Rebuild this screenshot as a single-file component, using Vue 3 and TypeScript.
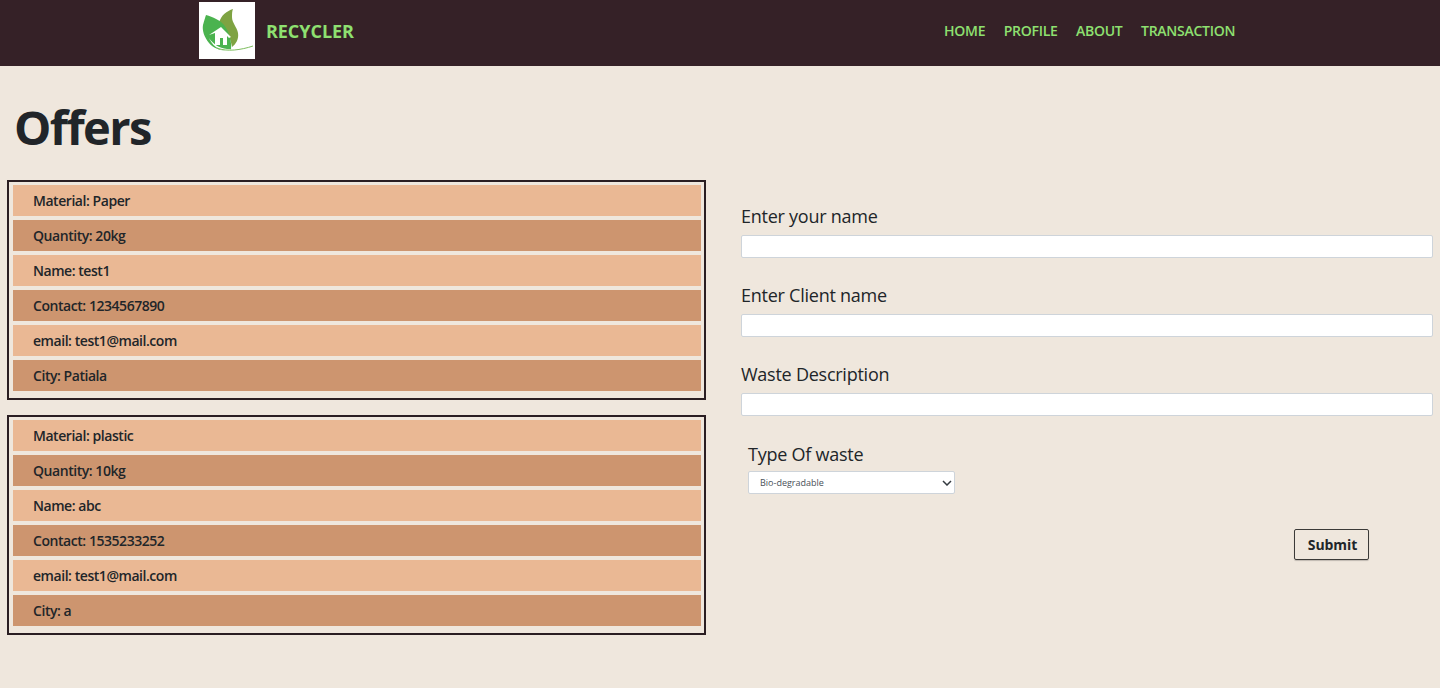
<template>
  <div class="page">
    <nav class="navbar">
      <div class="brand">
        <div class="logo">
          <svg width="56" height="57" viewBox="0 0 56 57">
            <path d="M34 7 C28 9 22 13 20 21 C26 26 31 33 33 45 C37 42 40 37 39 31 C38 25 33 21 33 15 C33 12 33 9 34 7Z" fill="#7ea342" />
            <path d="M7 13 C14 15 21 18 25 23 C30 29 33 39 32 48 C24 50 15 47 10 41 C5 35 3 28 4 23 C5 19 6 16 7 13Z" fill="#4bb34f" />
            <path d="M10 33 L22 25 L32 35 L30 36 L28 34 L28 43 L16 43 L16 31Z" fill="#fff" />
            <rect x="21" y="36" width="3" height="7" fill="#4bb34f" />
            <path d="M10 36 C14 42 20 46 28 47 C36 48 45 47 54 44 C45 49 35 50 27 49 C19 48 13 43 10 36Z" fill="#fff" />
            <path d="M18 46 C28 50 42 48 54 44" fill="none" stroke="#7dbd5e" stroke-width="1" />
          </svg>
        </div>
        <span class="brand-name">RECYCLER</span>
      </div>
      <ul class="nav-links">
        <li v-for="link in links" :key="link">{{ link }}</li>
      </ul>
    </nav>

    <h1 class="title">Offers</h1>

    <div class="content">
      <div class="offers">
        <div v-for="offer in offers" :key="offer.contact" class="offer">
          <div class="row">Material: {{ offer.material }}</div>
          <div class="row dark">Quantity: {{ offer.quantity }}</div>
          <div class="row">Name: {{ offer.name }}</div>
          <div class="row dark">Contact: {{ offer.contact }}</div>
          <div class="row">email: {{ offer.email }}</div>
          <div class="row dark">City: {{ offer.city }}</div>
        </div>
      </div>

      <form class="form" @submit.prevent>
        <div v-for="field in fields" :key="field" class="field">
          <label>{{ field }}</label>
          <input type="text" />
        </div>
        <div class="type-field">
          <label>Type Of waste</label>
          <div class="select-wrap">
            <select>
              <option>Bio-degradable</option>
              <option>Non-biodegradable</option>
            </select>
            <svg class="chevron" width="10" height="6" viewBox="0 0 10 6">
              <path d="M1 1 L5 5 L9 1" fill="none" stroke="#343a40" stroke-width="1.5" />
            </svg>
          </div>
        </div>
        <div class="actions">
          <button type="submit">Submit</button>
        </div>
      </form>
    </div>
  </div>
</template>

<script setup lang="ts">
const links = ['HOME', 'PROFILE', 'ABOUT', 'TRANSACTION']

const offers = [
  { material: 'Paper', quantity: '20kg', name: 'test1', contact: '1234567890', email: 'test1@mail.com', city: 'Patiala' },
  { material: 'plastic', quantity: '10kg', name: 'abc', contact: '1535233252', email: 'test1@mail.com', city: 'a' }
]

const fields = ['Enter your name', 'Enter Client name', 'Waste Description']
</script>

<style>
html,
body {
  margin: 0;
  background: #efe7dd;
}
</style>

<style scoped>
.page {
  height: 688px;
  overflow: hidden;
  background: #efe7dd;
  color: #212529;
  font-family: "Open Sans", "Noto Sans", sans-serif;
}

.navbar {
  height: 66px;
  background: #352127;
  display: flex;
  align-items: flex-start;
  padding-left: 199px;
  box-sizing: border-box;
}

.brand {
  display: flex;
  align-items: center;
  gap: 11px;
  width: 745px;
  padding-top: 2px;
}

.logo {
  width: 56px;
  height: 57px;
  background: #fff;
  flex: none;
}

.logo svg {
  display: block;
}

.brand-name {
  color: #8ee070;
  font-size: 18px;
  font-weight: 700;
  letter-spacing: -0.05px;
}

.nav-links {
  list-style: none;
  display: flex;
  gap: 18.5px;
  margin: 0;
  padding: 22px 0 0;
  color: #8ee070;
  font-size: 14px;
  font-weight: 600;
  line-height: 18px;
  letter-spacing: -0.27px;
}

.title {
  margin: 0;
  padding: 30px 0 0 14px;
  font-size: 47px;
  line-height: 62px;
  font-weight: 700;
  letter-spacing: -1.6px;
  color: #212529;
  height: 84px;
}

.content {
  display: flex;
  align-items: flex-start;
}

.offers {
  width: 699px;
  margin-left: 7px;
  display: flex;
  flex-direction: column;
  gap: 15px;
}

.offer {
  border: 2px solid #2a1e22;
  box-sizing: border-box;
  height: 220px;
  padding: 2.5px 3px 2px 4px;
  display: flex;
  flex-direction: column;
  gap: 4px;
}

.row {
  height: 31px;
  background: #eab894;
  font-size: 14px;
  font-weight: 550;
  line-height: 31px;
  padding-left: 20px;
  letter-spacing: -0.45px;
}

.row.dark {
  background: #cd956f;
}

.form {
  margin-left: 35px;
  width: 692px;
  padding-top: 25px;
}

.field {
  height: 79px;
}

label {
  display: block;
  font-size: 18px;
  line-height: 22px;
  letter-spacing: -0.25px;
  margin-bottom: 8px;
  font-weight: 400;
}

input {
  display: block;
  width: 100%;
  height: 23px;
  box-sizing: border-box;
  border: 1px solid #ced4da;
  border-radius: 2px;
  background: #fff;
  padding: 0;
  margin: 0;
}

.type-field {
  margin: 1px 0 0 7px;
}

.type-field label {
  margin-bottom: 6px;
}

.select-wrap {
  position: relative;
  width: 207px;
}

select {
  display: block;
  width: 100%;
  height: 23px;
  box-sizing: border-box;
  border: 1px solid #ced4da;
  border-radius: 2px;
  background: #fff;
  color: #495057;
  font-family: inherit;
  font-size: 9px;
  padding: 0 11px;
  appearance: none;
}

.chevron {
  position: absolute;
  right: 3px;
  top: 9px;
  pointer-events: none;
}

.actions {
  margin-top: 35px;
  padding-left: 553px;
}

button {
  width: 75px;
  height: 31px;
  box-sizing: border-box;
  background: transparent;
  border: 1px solid #3b3a38;
  border-radius: 2px;
  box-shadow: 0 1px 1px rgba(0, 0, 0, 0.2);
  color: #212529;
  font-family: inherit;
  font-size: 14px;
  font-weight: 700;
  letter-spacing: -0.1px;
  padding: 0 0 0 2px;
}
</style>
